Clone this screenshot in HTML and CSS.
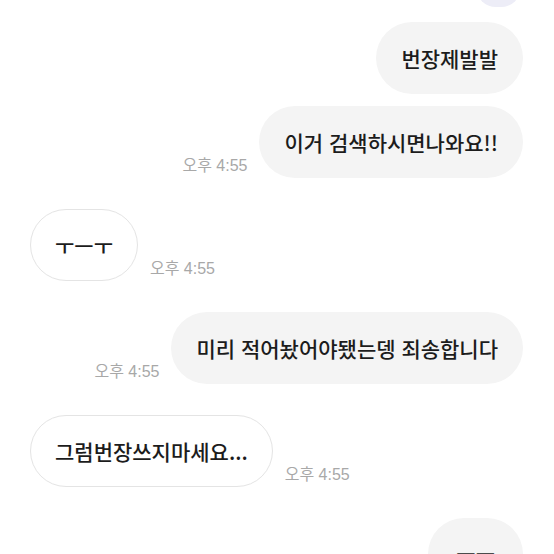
FILE: index.html
```html
<!DOCTYPE html>
<html lang="ko">
<head>
    <meta charset="UTF-8">
    <meta name="viewport" content="width=device-width, initial-scale=1.0">
    <title>채팅</title>
    <link rel="stylesheet" href="styles.css">
</head>
<body>
    <div class="chat">
        <div class="row me top-row">
            <div class="peek"></div>
        </div>

        <div class="row me first">
            <div class="bubble mine">번장제발발</div>
        </div>

        <div class="row me close">
            <span class="time">오후 4:55</span>
            <div class="bubble mine">이거 검색하시면나와요!!</div>
        </div>

        <div class="row them">
            <div class="bubble theirs">ㅜㅡㅜ</div>
            <span class="time">오후 4:55</span>
        </div>

        <div class="row me">
            <span class="time">오후 4:55</span>
            <div class="bubble mine">미리 적어놨어야됐는뎅 죄송합니다</div>
        </div>

        <div class="row them">
            <div class="bubble theirs">그럼번장쓰지마세요...</div>
            <span class="time">오후 4:55</span>
        </div>

        <div class="row me last">
            <div class="bubble mine">ㅠㅠ</div>
        </div>
    </div>
</body>
</html>
```

FILE: styles.css
```css
body {
    margin: 0;
    padding: 0;
    background: #fff;
    font-family: 'Noto Sans CJK KR', 'Noto Sans', sans-serif;
    color: #1c1c1c;
    height: 554px;
    overflow: hidden;
}

.chat {
    display: flex;
    flex-direction: column;
    padding: 0 31px 0 30px;
}

.row {
    display: flex;
    align-items: flex-end;
    gap: 12px;
    margin-top: 31px;
}

.row.me {
    justify-content: flex-end;
}

.row.them {
    justify-content: flex-start;
}

.row.top-row {
    margin-top: 0;
    padding-right: 2px;
}

.row.first {
    margin-top: 15px;
}

.row.close {
    margin-top: 12px;
}

.peek {
    width: 45px;
    height: 40px;
    margin-top: -33px;
    border-radius: 20px;
    background: #ededf7;
}

.bubble {
    font-size: 21px;
    font-weight: 500;
    line-height: 30px;
    padding: 21px 25px;
    border-radius: 36px;
    white-space: nowrap;
}

.last .bubble {
    padding: 22px 28px;
}

.mine {
    background: #f4f4f4;
}

.theirs {
    background: #fff;
    border: 1px solid #e4e4e4;
    padding: 20px 24px;
}

.time {
    font-family: 'Liberation Sans', 'Noto Sans CJK KR', sans-serif;
    font-size: 16px;
    color: #a8a8a8;
    line-height: 20px;
    margin-bottom: 2px;
    white-space: nowrap;
}
```
